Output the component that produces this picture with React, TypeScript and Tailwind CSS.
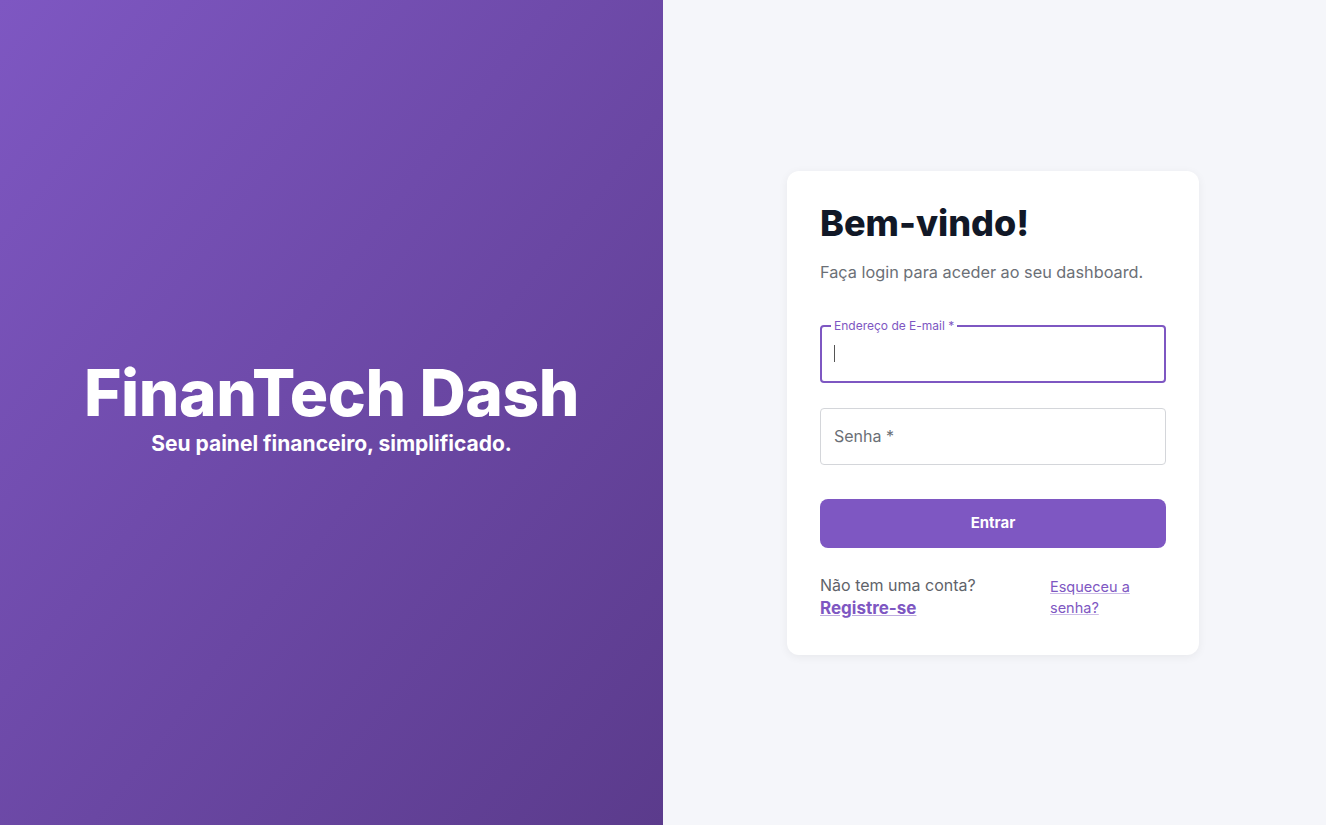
import React from 'react';

const font = { fontFamily: 'Inter, "Noto Sans", sans-serif' };

function EmailField() {
    return (
        <fieldset className="h-[63px] rounded-[4px] border-2 border-[#7e57c2] px-[12px]">
            <legend className="ml-[-3px] px-[3px] text-[12px] leading-[12px] text-[#7e57c2]">
                Endereço de E-mail *
            </legend>
            <div className="mt-[13px] h-[17px] w-[1px] bg-[#555]" />
        </fieldset>
    );
}

function PasswordField() {
    return (
        <div className="flex h-[57px] items-center rounded-[4px] border border-[#d4d6da] px-[13px]">
            <span className="text-[16px] text-[#6b6f76]">Senha *</span>
        </div>
    );
}

export default function App() {
    return (
        <div className="flex h-[825px] w-full" style={font}>
            <section className="flex w-1/2 flex-col items-center justify-center bg-linear-to-br from-[#7e57c2] to-[#5b3b8c] text-white">
                <h1 className="mt-[-10px] text-[64px] font-extrabold leading-[72px] tracking-[-0.4px]">FinanTech Dash</h1>
                <p className="mt-[1px] text-[21px] font-bold leading-[28px]">Seu painel financeiro, simplificado.</p>
            </section>

            <section className="flex w-1/2 items-center justify-center bg-[#f5f6fa]">
                <div className="ml-[-3px] w-[412px] rounded-[12px] bg-white px-[33px] pt-[31px] pb-[35px] shadow-[0_2px_10px_rgba(0,0,0,0.06)]">
                    <h2 className="text-[36px] font-extrabold leading-[43px] text-[#111827]">Bem-vindo!</h2>
                    <p className="mt-[15px] text-[16.3px] leading-[24px] text-[#6b6f76]">Faça login para aceder ao seu dashboard.</p>

                    <form className="mt-[36px] flex flex-col">
                        <EmailField />
                        <div className="mt-[25px]">
                            <PasswordField />
                        </div>
                        <button
                            type="button"
                            className="mt-[34px] h-[49px] rounded-[8px] bg-[#7e57c2] text-[15px] font-bold text-white"
                        >
                            Entrar
                        </button>
                    </form>

                    <div className="mt-[26px] flex justify-between">
                        <div className="text-[16px] leading-[23px]">
                            <p className="text-[#5f636a]">Não tem uma conta?</p>
                            <a href="#" className="text-[17px] font-bold text-[#7e57c2] underline decoration-[#7e57c2]/50">
                                Registre-se
                            </a>
                        </div>
                        <a href="#" className="mr-[26px] mt-[2px] w-[90px] text-[14.5px] leading-[21px] text-[#7e57c2] underline decoration-[#7e57c2]/40">
                            Esqueceu a senha?
                        </a>
                    </div>
                </div>
            </section>
        </div>
    );
}
